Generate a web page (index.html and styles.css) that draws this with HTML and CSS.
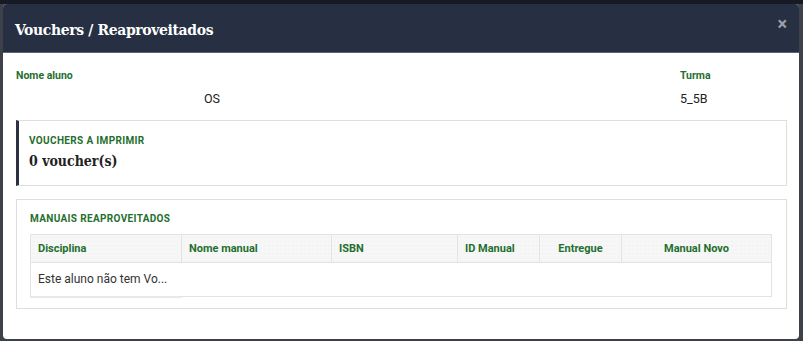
FILE: index.html
```html
<!DOCTYPE html>
<html lang="pt">
<head>
<meta charset="utf-8">
<title>Vouchers / Reaproveitados</title>
<link rel="stylesheet" href="styles.css">
</head>
<body>
<div class="backdrop">
  <div class="modal">
    <div class="modal-header">
      <h1 class="modal-title">Vouchers / Reaproveitados</h1>
      <span class="close">×</span>
    </div>
    <div class="modal-body">
      <div class="info-row">
        <div class="info info-name">
          <div class="label">Nome aluno</div>
          <div class="value"><span class="name-val">OS</span></div>
        </div>
        <div class="info info-class">
          <div class="label">Turma</div>
          <div class="value">5_5B</div>
        </div>
      </div>
      <div class="card card-accent">
        <div class="card-title">VOUCHERS A IMPRIMIR</div>
        <div class="card-count">0 voucher(s)</div>
      </div>
      <div class="card card-table">
        <div class="card-title">MANUAIS REAPROVEITADOS</div>
        <table class="grid">
          <thead>
            <tr>
              <th class="c1">Disciplina</th>
              <th class="c2">Nome manual</th>
              <th class="c3">ISBN</th>
              <th class="c4">ID Manual</th>
              <th class="c5 center">Entregue</th>
              <th class="c6 center">Manual Novo</th>
            </tr>
          </thead>
          <tbody>
            <tr>
              <td class="empty">Este aluno não tem Vo...</td>
              <td></td><td></td><td></td><td></td><td></td>
            </tr>
          </tbody>
        </table>
      </div>
    </div>
  </div>
</div>
</body>
</html>
```
FILE: styles.css
```css
* { box-sizing: border-box; }
html, body { margin: 0; padding: 0; }
body {
  width: 803px;
  height: 341px;
  background: #4a4f58;
  font-family: Roboto, "Liberation Sans", Arial, sans-serif;
  overflow: hidden;
}
.backdrop {
  height: 341px;
  background: linear-gradient(#151a24 0, #151a24 4px, #3c414a 4px);
  padding: 4px 4px 2px 3px;
}
.modal {
  width: 796px;
  height: 335px;
  background: #fff;
  border-radius: 4px;
  overflow: hidden;
}
.modal-header {
  height: 49px;
  background: #263042;
  border-bottom: 1px solid #5d6470;
  display: flex;
  align-items: center;
  justify-content: space-between;
  padding: 0 12px 0 12px;
}
.modal-title {
  margin: 0;
  color: #fff;
  font-family: "DejaVu Serif", "Liberation Serif", serif;
  font-stretch: condensed;
  font-weight: bold;
  font-size: 15.5px;
  letter-spacing: -0.35px;
  padding-top: 2px;
}
.close {
  color: #9aa0a8;
  font-size: 18px;
  font-weight: bold;
  line-height: 1;
  margin-top: -8px;
}
.modal-body {
  padding: 17px 12px 0 13px;
}
.info-row {
  display: flex;
  justify-content: space-between;
  height: 50px;
}
.info-class { width: 107px; }
.label {
  color: #1f6f2e;
  font-weight: bold;
  font-size: 10.5px;
  line-height: 12px;
}
.value {
  color: #222;
  font-size: 12.5px;
  margin-top: 9px;
}
.name-val { margin-left: 188px; }
.card {
  border: 1px solid #dedede;
  background: #fff;
}
.card-accent {
  height: 66px;
  border-left: 3px solid #2a3242;
  padding: 14px 0 0 10px;
}
.card-title {
  color: #1f6f2e;
  font-weight: bold;
  font-size: 10px;
  letter-spacing: 0.35px;
  line-height: 12px;
}
.card-count {
  margin-top: 6px;
  font-family: "DejaVu Serif", "Liberation Serif", serif;
  font-stretch: condensed;
  font-weight: bold;
  font-size: 14px;
  color: #222;
}
.card-table {
  margin-top: 13px;
  height: 110px;
  padding: 13px 13px 0 13px;
}
.grid {
  margin-top: 9px;
  width: 742px;
  border-collapse: collapse;
  border: 1px solid #e3e3e3;
  font-size: 11px;
}
.grid th {
  height: 28px;
  background-color: #f7f7f7;
  background-image: radial-gradient(#ececec 0.6px, transparent 0.8px);
  background-size: 4px 4px;
  color: #1f6f2e;
  font-weight: bold;
  text-align: left;
  padding: 0 7px;
  border-right: 1px solid #e3e3e3;
  border-bottom: 1px solid #e3e3e3;
}
.grid th.center { text-align: center; }
.grid .c1 { width: 151px; }
.grid .c2 { width: 150px; }
.grid .c3 { width: 126px; }
.grid .c4 { width: 82px; }
.grid .c5 { width: 82px; }
.grid td {
  height: 34px;
  padding: 0 7px;
  color: #333;
  font-size: 12px;
}
.grid td.empty {
  border-bottom: 2px solid #e8e8e8;
}
```
